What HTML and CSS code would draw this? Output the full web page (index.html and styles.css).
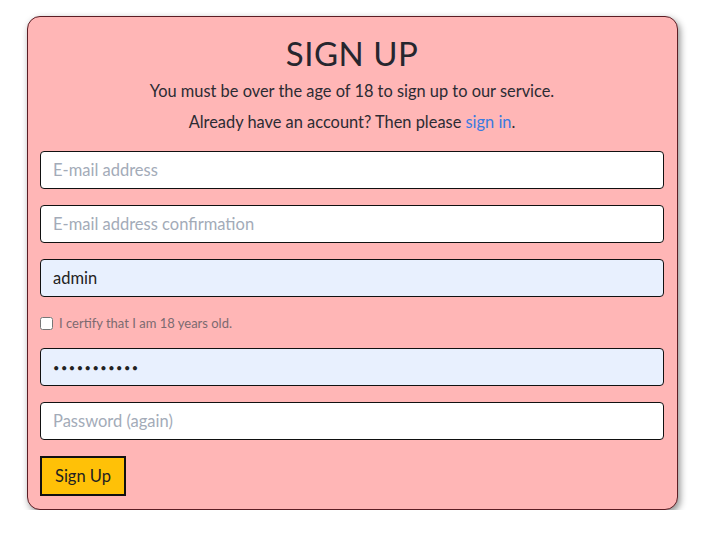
FILE: index.html
```html
<!DOCTYPE html>
<html lang="en">
<head>
<meta charset="utf-8">
<title>Sign Up</title>
<link rel="stylesheet" href="styles.css">
</head>
<body>
<div class="card">
  <h1 class="title">SIGN UP</h1>
  <p class="lead">You must be over the age of 18 to sign up to our service.</p>
  <p class="lead">Already have an account? Then please <a href="#" class="link">sign in</a>.</p>
  <form class="form">
    <input class="field" type="email" placeholder="E-mail address">
    <input class="field" type="email" placeholder="E-mail address confirmation">
    <input class="field filled" type="text" value="admin">
    <label class="check"><input type="checkbox" class="box"><span>I certify that I am 18 years old.</span></label>
    <input class="field filled pw" type="password" value="adminadmin1">
    <input class="field" type="password" placeholder="Password (again)">
    <div><button type="button" class="btn">Sign Up</button></div>
  </form>
</div>
</body>
</html>
```
FILE: styles.css
```css
html, body { margin: 0; padding: 0; background: #fff; }
body {
  padding: 16px 33px 0 27px;
  font-family: Lato, "Noto Sans", sans-serif;
  color: #2b2b33;
}
.card {
  background: #ffb6b6;
  border: 1px solid #5b1d24;
  border-radius: 13px;
  box-shadow: 2px 3px 7px rgba(0,0,0,0.45);
  padding: 14px 13px 13px 12px;
  box-sizing: border-box;
  height: 494px;
}
.title {
  margin: 0;
  text-align: center;
  font-weight: 400;
  font-size: 33px;
  line-height: 44px;
  letter-spacing: 0.5px;
  color: #26262e;
}
.lead {
  margin: 0;
  text-align: center;
  font-size: 16.4px;
  line-height: 31px;
  color: #2b2b33;
}
.link { color: #3a7be0; text-decoration: none; }
.form {
  margin-top: 14px;
  display: flex;
  flex-direction: column;
  gap: 16px;
}
.field {
  box-sizing: border-box;
  width: 100%;
  height: 38px;
  border: 1px solid #111;
  border-radius: 4px;
  background: #fff;
  padding: 0 12px;
  font-family: inherit;
  font-size: 16.5px;
  color: #222;
  outline: none;
}
.field::placeholder { color: #a3abb8; }
.filled { background: #e8f0fe; }
.pw { font-size: 11px; letter-spacing: 1.5px; }
.check {
  display: flex;
  align-items: center;
  gap: 6px;
  height: 18px;
  margin: 1px 0 0;
  font-size: 13px;
  color: #7c6a70;
}
.box {
  margin: 0;
  width: 13px;
  height: 13px;
}
.btn {
  height: 40px;
  padding: 0 13px;
  background: #ffc107;
  border: 2px solid #111;
  border-radius: 0;
  font-family: inherit;
  font-size: 16.5px;
  color: #222;
}
```
